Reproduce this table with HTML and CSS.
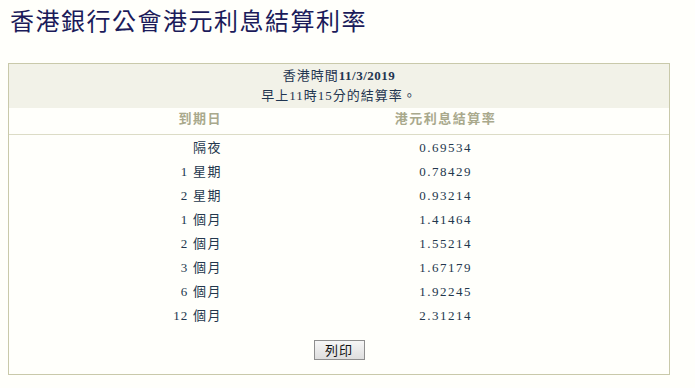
FILE: index.html
```html
<!DOCTYPE html>
<html lang="zh-Hant">
<head>
<meta charset="utf-8">
<link rel="stylesheet" href="styles.css">
</head>
<body>
<h1 class="title">香港銀行公會港元利息結算利率</h1>
<div class="panel">
  <div class="panel-head">
    <div class="head-line">香港時間<b class="date">11/3/2019</b></div>
    <div class="head-line">早上<span class="num">11</span>時<span class="num">15</span>分的結算率。</div>
  </div>
  <table class="rates">
    <thead>
      <tr><th class="c1">到期日</th><th class="c2">港元利息結算率</th></tr>
    </thead>
    <tbody>
      <tr><td class="c1">隔夜</td><td class="c2">0.69534</td></tr>
      <tr><td class="c1"><span class="num">1</span> 星期</td><td class="c2">0.78429</td></tr>
      <tr><td class="c1"><span class="num">2</span> 星期</td><td class="c2">0.93214</td></tr>
      <tr><td class="c1"><span class="num">1</span> 個月</td><td class="c2">1.41464</td></tr>
      <tr><td class="c1"><span class="num">2</span> 個月</td><td class="c2">1.55214</td></tr>
      <tr><td class="c1"><span class="num">3</span> 個月</td><td class="c2">1.67179</td></tr>
      <tr><td class="c1"><span class="num">6</span> 個月</td><td class="c2">1.92245</td></tr>
      <tr><td class="c1"><span class="num">12</span> 個月</td><td class="c2">2.31214</td></tr>
    </tbody>
  </table>
  <div class="actions"><button class="print-btn" type="button">列印</button></div>
</div>
</body>
</html>
```
FILE: styles.css
```css
html, body {
  margin: 0;
  padding: 0;
  background: #fffffb;
}
body {
  padding: 0 8px;
  font-family: "Liberation Serif", "Noto Sans CJK TC", serif;
  color: #23374d;
}
.title {
  margin: 0;
  padding: 8px 0 0 2px;
  height: 55px;
  box-sizing: border-box;
  font-family: "Liberation Serif", "Noto Sans CJK TC", serif;
  font-weight: normal;
  font-size: 24px;
  line-height: 28px;
  letter-spacing: 1.5px;
  color: #1b1b5a;
}
.panel {
  margin-top: 8px;
  width: 662px;
  box-sizing: border-box;
  border: 1px solid #c9c9aa;
  background: #fffffb;
  padding-bottom: 14px;
}
.panel-head {
  background: #f2f2e8;
  text-align: center;
  padding: 2px 0 3px;
  font-size: 13px;
  line-height: 19.5px;
  letter-spacing: 1px;
  color: #1f3550;
}
.date {
  font-weight: bold;
  letter-spacing: 0.5px;
}
.num {
  letter-spacing: 1px;
}
.rates {
  width: 100%;
  border-collapse: collapse;
  font-size: 13px;
  letter-spacing: 1.5px;
}
.rates th {
  height: 26px;
  box-sizing: border-box;
  padding: 0 0 4px;
  line-height: 21px;
  font-weight: bold;
  color: #a9a98c;
  border-bottom: 1px solid #dcdcc6;
  vertical-align: top;
}
.rates th.c1 {
  text-align: right;
  width: 213px;
}
.rates th.c2 {
  text-align: center;
}
.rates td {
  height: 24px;
  padding: 0;
  line-height: 24px;
  vertical-align: top;
}
.rates tbody tr:first-child td {
  padding-top: 1px;
}
.rates td.c1 {
  text-align: right;
}
.rates td.c2 {
  text-align: center;
}
.actions {
  display: flex;
  justify-content: center;
  padding-top: 12px;
}
.print-btn {
  width: 51px;
  height: 20px;
  padding: 0;
  font-family: "Noto Sans CJK TC", sans-serif;
  font-size: 13px;
  line-height: 18px;
  letter-spacing: 1px;
  color: #111;
  background: linear-gradient(#f6f6f6, #dedede);
  border: 1px solid #8e8e8e;
  border-radius: 0;
}
```
